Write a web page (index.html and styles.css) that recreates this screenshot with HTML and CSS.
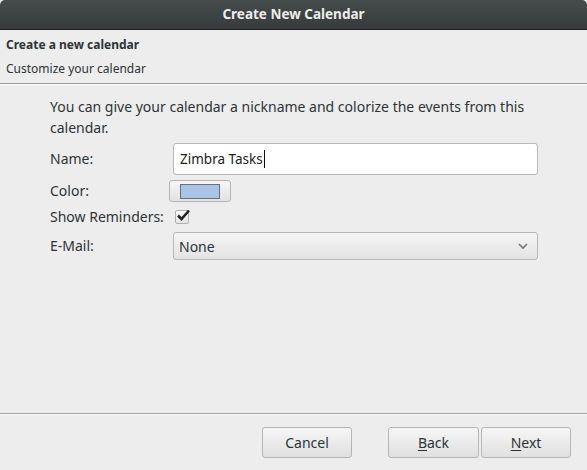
FILE: index.html
```html
<!DOCTYPE html>
<html>
<head>
<meta charset="utf-8">
<link rel="stylesheet" href="styles.css">
</head>
<body>
<div class="window">
  <div class="titlebar">Create New Calendar</div>
  <div class="header">
    <div class="h-title">Create a new calendar</div>
    <div class="h-sub">Customize your calendar</div>
  </div>
  <div class="content">
    <p class="intro">You can give your calendar a nickname and colorize the events from this calendar.</p>
    <div class="form">
      <div class="label">Name:</div>
      <div class="field"><div class="input">Zimbra Tasks<span class="caret"></span></div></div>
      <div class="label">Color:</div>
      <div class="field"><div class="colorbtn"><span class="swatch"></span></div></div>
      <div class="label">Show Reminders:</div>
      <div class="field"><span class="check"><svg width="15" height="13" viewBox="0 0 15 13"><path d="M2 6.5 L5.5 10 L13 1.5" fill="none" stroke="#222" stroke-width="2.6"/></svg></span></div>
      <div class="label">E-Mail:</div>
      <div class="field"><div class="select"><span>None</span><svg width="10" height="7" viewBox="0 0 10 7"><path d="M1 1 L5 5 L9 1" fill="none" stroke="#777" stroke-width="1.6"/></svg></div></div>
    </div>
  </div>
  <div class="footer">
    <button class="btn cancel">Cancel</button>
    <div class="navbtns">
      <button class="btn"><u>B</u>ack</button>
      <button class="btn"><u>N</u>ext</button>
    </div>
  </div>
</div>
</body>
</html>
```

FILE: styles.css
```css
html, body {
  margin: 0;
  padding: 0;
  background: #ededed;
}
body {
  font-family: "Noto Sans", "Open Sans", sans-serif;
  font-size: 14px;
  color: #2e3436;
}
.window {
  width: 587px;
  height: 470px;
  display: flex;
  flex-direction: column;
  background: #ededed;
}
.titlebar {
  height: 29px;
  line-height: 29px;
  border-bottom: 1px solid #1c1f1f;
  border-radius: 5px 5px 0 0;
  background: linear-gradient(#454c4b, #363c3b);
  color: #eeeeec;
  font-weight: bold;
  text-align: center;
  font-size: 13.5px;
}
.header {
  padding: 5px 6px 0;
  height: 54px;
  box-sizing: border-box;
  border-bottom: 1px solid #9a9a9a;
  display: flex;
  flex-direction: column;
  font-size: 12px;
}
.h-title {
  font-weight: bold;
  line-height: 20px;
}
.h-sub {
  line-height: 20px;
  margin-top: 4px;
}
.content {
  flex: 1;
  padding: 12px 49px 0 50px;
  border-bottom: 1px solid #a0a0a0;
  box-shadow: inset 0 1px 0 #fafafa;
}
.intro {
  margin: 0;
  line-height: 21px;
}
.form {
  display: grid;
  grid-template-columns: 123px 365px;
  grid-template-rows: 32px 22px 20px 28px;
  row-gap: 5px;
  margin-top: 5px;
  align-items: center;
}
.label {
  line-height: 20px;
}
.field {
  display: flex;
  align-items: center;
}
.input {
  width: 365px;
  height: 32px;
  box-sizing: border-box;
  border: 1px solid #b8b8b8;
  border-radius: 3px;
  background: #fff;
  padding: 0 6px;
  display: flex;
  align-items: center;
  color: #222;
  font-size: 13.5px;
}
.caret {
  display: inline-block;
  width: 1px;
  height: 18px;
  background: #111;
  margin-left: 1px;
}
.colorbtn {
  margin-left: -4px;
  width: 62px;
  height: 22px;
  box-sizing: border-box;
  border: 1px solid #b5b5b5;
  border-radius: 3px;
  background: linear-gradient(#f6f6f6, #e2e2e2);
  display: flex;
  align-items: center;
  justify-content: center;
}
.swatch {
  width: 40px;
  height: 15px;
  border: 1px solid #707070;
  background: #a8c4e6;
  box-sizing: border-box;
}
.check {
  margin-left: 2px;
  width: 12px;
  height: 12px;
  border: 1px solid #b0b0b0;
  border-radius: 2px;
  background: linear-gradient(#fafafa, #e4e4e4);
  position: relative;
}
.check svg {
  position: absolute;
  left: 0px;
  top: -2px;
}
.select {
  width: 365px;
  height: 28px;
  box-sizing: border-box;
  border: 1px solid #b8b8b8;
  border-radius: 3px;
  background: linear-gradient(#f5f5f5, #e3e3e3);
  display: flex;
  align-items: center;
  justify-content: space-between;
  padding: 0 9px 0 5px;
  color: #2e3436;
}
.footer {
  height: 56px;
  box-sizing: border-box;
  box-shadow: inset 0 1px 0 #fafafa;
  display: flex;
  align-items: flex-start;
  padding: 13px 16px 0 262px;
}
.btn {
  width: 90px;
  height: 31px;
  box-sizing: border-box;
  border: 1px solid #b5b5b5;
  border-radius: 3px;
  background: linear-gradient(#f6f6f6, #e0e0e0);
  font-family: "Noto Sans", "Open Sans", sans-serif;
  font-size: 14px;
  color: #2e3436;
  padding: 0;
}
.btn u {
  text-decoration-thickness: 1px;
  text-underline-offset: 2px;
}
.navbtns {
  margin-left: auto;
  display: flex;
  gap: 2px;
}
.navbtns .btn {
  width: 91px;
}
.navbtns .btn + .btn {
  width: 90px;
}
```
